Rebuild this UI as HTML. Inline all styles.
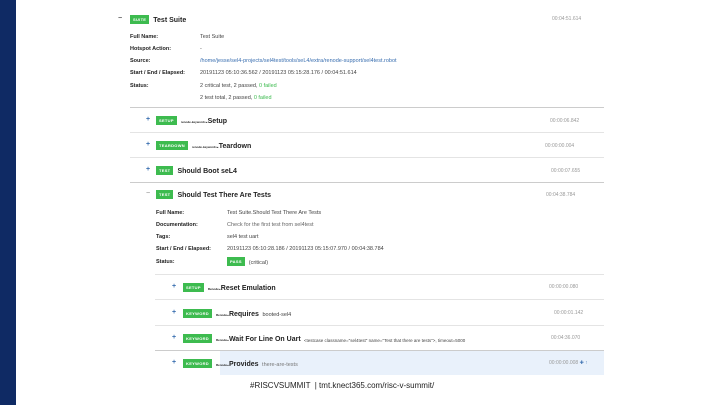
<!DOCTYPE html><html><head><style>
body{margin:0;width:720px;height:405px;background:#fff;position:relative;overflow:hidden;font-family:"Liberation Sans",sans-serif;color:#222}
.a{position:absolute;white-space:nowrap}
.r{display:flex;align-items:center;height:10px;gap:2px}
.r>span:not(.b){position:relative;top:2px}
.bar{left:0;top:0;width:16px;height:405px;background:#0f2a64}
.b{background:#3dbb4f;color:#fff;font-weight:bold;font-size:4px;letter-spacing:.3px;padding:0 3px;height:9px;line-height:9px;display:inline-block;margin-right:2px}
.t{font-size:7px;font-weight:bold;line-height:10px}
.l{font-size:5.5px;font-weight:bold}
.v{font-size:5.5px;color:#444}
.g{color:#3dbb4f}
.lk{color:#3a6fb0}
.tm{font-size:5px;color:#999}
.hr{height:1px;background:#e4e4e4}
.p{font-size:7px;color:#3a6fb0;font-weight:bold;line-height:10px}
.s{font-size:3px;font-weight:bold;margin-right:-2px}
</style></head><body>
<div class="a bar"></div>
<div class="a p" style="left:118px;top:14px;color:#555">−</div>
<div class="a r" style="left:130px;top:14px"><span class="b">SUITE</span><span class="t">Test Suite</span></div>
<div class="a tm" style="left:552px;top:16px">00:04:51.614</div>
<div class="a l" style="left:130px;top:34px">Full Name:</div><div class="a v" style="left:200px;top:34px">Test Suite</div>
<div class="a l" style="left:130px;top:46px">Hotspot Action:</div><div class="a v" style="left:200px;top:46px">-</div>
<div class="a l" style="left:130px;top:58px">Source:</div><div class="a v lk" style="left:200px;top:58px">/home/jesse/sel4-projects/sel4test/tools/seL4/extra/renode-support/sel4test.robot</div>
<div class="a l" style="left:130px;top:70px">Start / End / Elapsed:</div><div class="a v" style="left:200px;top:70px">20191123 05:10:36.562 / 20191123 05:15:28.176 / 00:04:51.614</div>
<div class="a l" style="left:130px;top:83px">Status:</div><div class="a v" style="left:200px;top:83px">2 critical test, 2 passed, <span class="g">0 failed</span></div>
<div class="a v" style="left:200px;top:95px">2 test total, 2 passed, <span class="g">0 failed</span></div>
<div class="a hr" style="left:130px;top:107px;width:474px;background:#ccc"></div>
<div class="a p" style="left:146px;top:115px">+</div>
<div class="a r" style="left:156px;top:115px"><span class="b">SETUP</span><span class="s">renode-keywords</span><span class="t">.Setup</span></div>
<div class="a tm" style="left:550px;top:118px">00:00:06.842</div>
<div class="a hr" style="left:130px;top:132px;width:474px"></div>
<div class="a p" style="left:146px;top:140px">+</div>
<div class="a r" style="left:156px;top:140px"><span class="b">TEARDOWN</span><span class="s">renode-keywords</span><span class="t">.Teardown</span></div>
<div class="a tm" style="left:545px;top:143px">00:00:00.004</div>
<div class="a hr" style="left:130px;top:157px;width:474px"></div>
<div class="a p" style="left:146px;top:165px">+</div>
<div class="a r" style="left:156px;top:165px"><span class="b">TEST</span><span class="t">Should Boot seL4</span></div>
<div class="a tm" style="left:551px;top:168px">00:00:07.655</div>
<div class="a hr" style="left:130px;top:182px;width:474px;background:#ccc"></div>
<div class="a p" style="left:146px;top:189px;color:#aaa">−</div>
<div class="a r" style="left:156px;top:189px"><span class="b">TEST</span><span class="t">Should Test There Are Tests</span></div>
<div class="a tm" style="left:546px;top:192px">00:04:38.784</div>
<div class="a l" style="left:156px;top:210px">Full Name:</div><div class="a v" style="left:227px;top:210px">Test Suite.Should Test There Are Tests</div>
<div class="a l" style="left:156px;top:222px">Documentation:</div><div class="a v" style="left:227px;top:222px;color:#666">Check for the first test from sel4test</div>
<div class="a l" style="left:156px;top:234px">Tags:</div><div class="a v" style="left:227px;top:234px">sel4 test uart</div>
<div class="a l" style="left:156px;top:246px">Start / End / Elapsed:</div><div class="a v" style="left:227px;top:246px">20191123 05:10:28.186 / 20191123 05:15:07.970 / 00:04:38.784</div>
<div class="a l" style="left:156px;top:259px">Status:</div><div class="a r" style="left:227px;top:256px"><span class="b">PASS</span><span class="v">(critical)</span></div>
<div class="a hr" style="left:155px;top:274px;width:449px"></div>
<div class="a p" style="left:172px;top:282px">+</div>
<div class="a r" style="left:183px;top:282px"><span class="b">SETUP</span><span class="s">Renode</span><span class="t">.Reset Emulation</span></div>
<div class="a tm" style="left:549px;top:284px">00:00:00.080</div>
<div class="a hr" style="left:155px;top:299px;width:449px"></div>
<div class="a p" style="left:172px;top:308px">+</div>
<div class="a r" style="left:183px;top:308px"><span class="b">KEYWORD</span><span class="s">Renode</span><span class="t">.Requires</span> <span class="v">&nbsp;booted-sel4</span></div>
<div class="a tm" style="left:554px;top:310px">00:00:01.142</div>
<div class="a hr" style="left:155px;top:325px;width:449px"></div>
<div class="a p" style="left:172px;top:333px">+</div>
<div class="a r" style="left:183px;top:333px"><span class="b">KEYWORD</span><span class="s">Renode</span><span class="t">.Wait For Line On Uart</span> <span class="v" style="font-size:4.5px">&nbsp;&lt;testcase classname="sel4test" name="Test that there are tests"&gt;, timeout=5000</span></div>
<div class="a tm" style="left:551px;top:335px">00:04:36.070</div>
<div class="a hr" style="left:155px;top:350px;width:449px;background:#ccc"></div>
<div class="a" style="left:220px;top:351px;width:384px;height:24px;background:#e9f1fb"></div>
<div class="a p" style="left:172px;top:358px">+</div>
<div class="a r" style="left:183px;top:358px"><span class="b">KEYWORD</span><span class="s">Renode</span><span class="t">.Provides</span> <span class="v" style="color:#777">&nbsp;there-are-tests</span></div>
<div class="a tm" style="left:549px;top:360px">00:00:00.008 <span style="color:#3a6fb0">✚ ↑</span></div>
<div class="a" style="left:250px;top:381px;font-size:8px;color:#222">#RISCVSUMMIT &nbsp;| tmt.knect365.com/risc-v-summit/</div>
</body></html>
